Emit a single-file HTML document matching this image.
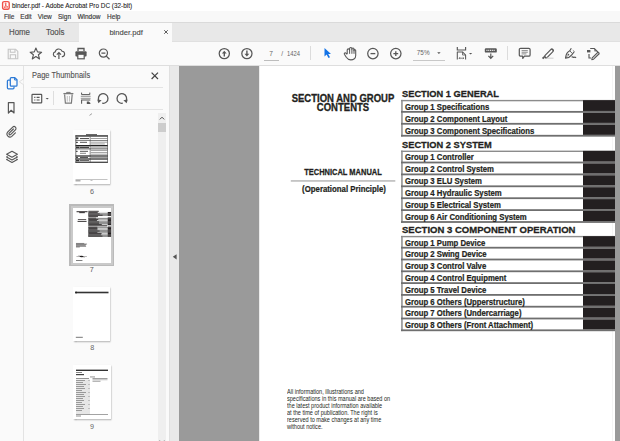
<!DOCTYPE html>
<html><head><meta charset="utf-8">
<style>
*{margin:0;padding:0;box-sizing:border-box}
html,body{width:620px;height:441px;overflow:hidden;background:#fff;font-family:"Liberation Sans",sans-serif;position:relative}
.a{position:absolute;display:block}
.t{position:absolute;white-space:nowrap;line-height:1}
</style></head><body>
<div class="a" style="left:0px;top:0px;width:620px;height:11px;background:#ffffff;"></div>
<div class="a" style="left:0px;top:11px;width:620px;height:11px;background:#f8f8f8;"></div>
<div class="a" style="left:0px;top:22px;width:620px;height:20px;background:#e8e8e8;"></div>
<div class="a" style="left:79px;top:22px;width:93px;height:20px;background:#fafafa;"></div>
<div class="a" style="left:0px;top:22px;width:620px;height:1px;background:#dadada;"></div>
<div class="a" style="left:0px;top:41px;width:79px;height:1px;background:#e0e0e0;"></div>
<div class="a" style="left:172px;top:41px;width:448px;height:1px;background:#e0e0e0;"></div>
<div class="a" style="left:0px;top:42px;width:620px;height:23px;background:#fafafa;"></div>
<div class="a" style="left:0px;top:65px;width:620px;height:1px;background:#dedede;"></div>
<div class="a" style="left:0px;top:66px;width:23px;height:375px;background:#fafafa;"></div>
<div class="a" style="left:23px;top:66px;width:1px;height:375px;background:#e3e3e3;"></div>
<div class="a" style="left:24px;top:66px;width:145px;height:375px;background:#fafafa;"></div>
<div class="a" style="left:158px;top:113px;width:8px;height:328px;background:#efefef;"></div>
<div class="a" style="left:169px;top:66px;width:1px;height:375px;background:#e0e0e0;"></div>
<div class="a" style="left:170px;top:66px;width:9px;height:375px;background:#e9e9e9;"></div>
<div class="a" style="left:179px;top:66px;width:441px;height:375px;background:#9a9a9a;"></div>
<div class="a" style="left:259px;top:66px;width:356px;height:375px;background:#ffffff;"></div>
<div class="a" style="left:259px;top:66px;width:1px;height:375px;background:#ececec;"></div>
<div class="a" style="left:612px;top:66px;width:1px;height:375px;background:#f5f5f5;"></div>
<svg class="a" style="left:1px;top:0px;" width="10" height="11" viewBox="0 0 10 11"><rect x="1.6" y="1.6" width="6.6" height="7.6" rx="1.5" fill="#fff" stroke="#f0504a" stroke-width="1.4"/><path d="M3.3 7.6 C4.5 5.5 5.2 4.2 5 3.3 C4.9 2.6 4.2 2.8 4.3 3.6 C4.5 5 5.6 6.4 6.9 7.2 M3.2 7.5 C4.3 6.9 5.7 6.8 6.8 7" fill="none" stroke="#f0504a" stroke-width="0.9"/></svg>
<div class="t" style="left:12.00px;top:2.58px;font-size:6.4px;color:#1a1a1a;-webkit-text-stroke:0.08px #1a1a1a;">binder.pdf - Adobe Acrobat Pro DC (32-bit)</div>
<div class="t" style="left:3.90px;top:14.10px;font-size:6.5px;color:#3a3a3a;-webkit-text-stroke:0.15px #3a3a3a;">File</div>
<div class="t" style="left:20.30px;top:14.10px;font-size:6.5px;color:#3a3a3a;-webkit-text-stroke:0.15px #3a3a3a;">Edit</div>
<div class="t" style="left:37.80px;top:14.10px;font-size:6.5px;color:#3a3a3a;-webkit-text-stroke:0.15px #3a3a3a;">View</div>
<div class="t" style="left:58.00px;top:14.10px;font-size:6.5px;color:#3a3a3a;-webkit-text-stroke:0.15px #3a3a3a;">Sign</div>
<div class="t" style="left:77.40px;top:14.10px;font-size:6.5px;color:#3a3a3a;-webkit-text-stroke:0.15px #3a3a3a;">Window</div>
<div class="t" style="left:107.10px;top:14.10px;font-size:6.5px;color:#3a3a3a;-webkit-text-stroke:0.15px #3a3a3a;">Help</div>
<div class="t" style="left:9.00px;top:28.29px;font-size:8.4px;color:#505050;transform:scaleX(0.94);transform-origin:0 0;-webkit-text-stroke:0.15px #505050;">Home</div>
<div class="t" style="left:46.00px;top:28.29px;font-size:8.4px;color:#505050;transform:scaleX(0.94);transform-origin:0 0;-webkit-text-stroke:0.15px #505050;">Tools</div>
<div class="t" style="left:109.40px;top:28.77px;font-size:7.6px;color:#4a4a4a;-webkit-text-stroke:0.12px #4a4a4a;">binder.pdf</div>
<svg class="a" style="left:162px;top:28px;" width="8" height="8" viewBox="0 0 8 8"><path d="M2.2 2.2 L5.8 5.8 M5.8 2.2 L2.2 5.8" stroke="#555" stroke-width="0.95"/></svg>
<svg class="a" style="left:7px;top:48px;" width="12" height="12" viewBox="0 0 12 12"><path d="M1.2 1.2 H8.6 L10.8 3.4 V10.8 H1.2 Z" fill="none" stroke="#c4c4c4" stroke-width="1.1"/><path d="M3.3 1.2 V4.3 H8 V1.2 M3.3 10.8 V6.8 H8.6 V10.8" fill="none" stroke="#c4c4c4" stroke-width="1.1"/></svg>
<svg class="a" style="left:29px;top:47px;" width="14" height="13" viewBox="0 0 14 13"><path d="M6.9 1 L8.5 4.9 L12.6 5.2 L9.4 7.8 L10.5 11.9 L6.9 9.6 L3.3 11.9 L4.4 7.8 L1.2 5.2 L5.3 4.9 Z" fill="none" stroke="#575757" stroke-width="1.15" stroke-linejoin="round"/></svg>
<svg class="a" style="left:52px;top:47px;" width="14" height="13" viewBox="0 0 14 13"><path d="M4 9.6 H3.3 A2.4 2.4 0 0 1 3.2 4.9 A3.6 3.6 0 0 1 10.1 4.3 A2.7 2.7 0 0 1 10.6 9.6 H9.8" fill="none" stroke="#575757" stroke-width="1.15"/><path d="M6.9 12 V5.6 M4.8 7.6 L6.9 5.5 L9 7.6" fill="none" stroke="#575757" stroke-width="1.2"/></svg>
<svg class="a" style="left:74px;top:47px;" width="14" height="13" viewBox="0 0 14 13"><path d="M4 4 V1.5 H10 V4" fill="none" stroke="#575757" stroke-width="1.3"/><rect x="1.4" y="4.2" width="11.2" height="5.4" rx="1" fill="#575757"/><rect x="3.8" y="7.2" width="6.4" height="4.6" fill="#fafafa" stroke="#575757" stroke-width="1.2"/></svg>
<svg class="a" style="left:98px;top:48px;" width="14" height="12" viewBox="0 0 14 12"><circle cx="5.4" cy="5.1" r="4.1" fill="none" stroke="#575757" stroke-width="1.2"/><path d="M3.4 5.1 H7.4 M8.3 8.1 L11.5 11.3" fill="none" stroke="#575757" stroke-width="1.3"/></svg>
<svg class="a" style="left:218px;top:47px;" width="13" height="13" viewBox="0 0 13 13"><circle cx="6.3" cy="6.6" r="5.1" fill="none" stroke="#575757" stroke-width="1.25"/><path d="M6.3 9.6 V5.2" stroke="#575757" stroke-width="1.4"/><path d="M3.9 6.4 L6.3 3.7 L8.7 6.4 Z" fill="#575757"/></svg>
<svg class="a" style="left:240px;top:47px;" width="13" height="13" viewBox="0 0 13 13"><circle cx="6.9" cy="6.6" r="5.1" fill="none" stroke="#575757" stroke-width="1.25"/><path d="M6.9 3.6 V8" stroke="#575757" stroke-width="1.4"/><path d="M4.5 6.8 L6.9 9.5 L9.3 6.8 Z" fill="#575757"/></svg>
<div class="t" style="left:269.30px;top:50.61px;font-size:6.6px;color:#666;">7</div>
<div class="a" style="left:264px;top:60px;width:15px;height:1px;background:#bdbdbd;"></div>
<div class="t" style="left:281.20px;top:50.81px;font-size:6.6px;color:#666;">/</div>
<div class="t" style="left:287.00px;top:50.87px;font-size:6.3px;color:#666;transform:scaleX(0.92);transform-origin:0 0;">1424</div>
<div class="a" style="left:310px;top:46px;width:1px;height:14px;background:#dcdcdc;"></div>
<svg class="a" style="left:322px;top:47px;" width="11" height="12" viewBox="0 0 11 12"><path d="M2.5 1 L2.5 9.6 L4.6 7.6 L6.5 11 L8 10.2 L6.2 6.9 L9 6.9 Z" fill="#1473e6"/></svg>
<svg class="a" style="left:343px;top:46px;" width="15" height="16" viewBox="0 0 15 16"><path d="M4.2 8 V4.1 A1.2 1.2 0 0 1 6.6 4.1 V2.7 A1.15 1.15 0 0 1 8.9 2.7 V3.1 A1.05 1.05 0 0 1 11 3.1 V4.6 A0.85 0.85 0 0 1 12.7 4.6 V9.6 C12.7 12.4 10.6 13.9 7.8 13.9 C5.6 13.9 4.3 12.8 3.3 11.3 L1.4 8.2 A0.95 0.95 0 0 1 3 7.2 L4.2 8.4" fill="none" stroke="#575757" stroke-width="1.1" stroke-linejoin="round"/><path d="M6.6 4 V7.8 M8.9 2.7 V7.8 M11 3.1 V7.8" stroke="#575757" stroke-width="1"/></svg>
<svg class="a" style="left:366px;top:47px;" width="14" height="13" viewBox="0 0 14 13"><circle cx="6.9" cy="6.6" r="5.2" fill="none" stroke="#575757" stroke-width="1.25"/><path d="M4.5 6.6 H9.3" stroke="#575757" stroke-width="1.3"/></svg>
<svg class="a" style="left:389px;top:47px;" width="14" height="13" viewBox="0 0 14 13"><circle cx="6.8" cy="6.6" r="5.2" fill="none" stroke="#575757" stroke-width="1.25"/><path d="M4.4 6.6 H9.2 M6.8 4.2 V9" stroke="#575757" stroke-width="1.3"/></svg>
<div class="t" style="left:416.80px;top:50.48px;font-size:6.4px;color:#666;">75%</div>
<svg class="a" style="left:436px;top:51px;" width="6" height="4" viewBox="0 0 6 4"><path d="M1.2 1.2 H4.6 L2.9 3 Z" fill="#555"/></svg>
<div class="a" style="left:413px;top:60px;width:32px;height:1px;background:#c8c8c8;"></div>
<svg class="a" style="left:455px;top:46px;" width="20" height="15" viewBox="0 0 20 15"><path d="M2.3 1 V4 H10.6 V1" fill="none" stroke="#575757" stroke-width="1.15"/><path d="M2.3 13.4 V5.9 H7.5 L10.6 9 V13.4" fill="none" stroke="#575757" stroke-width="1.05" stroke-linejoin="round"/><path d="M7.5 5.9 V9 H10.6" fill="none" stroke="#575757" stroke-width="0.8"/><path d="M4 12.2 H8.8 M4.9 11.3 L4 12.2 L4.9 13.1 M7.9 11.3 L8.8 12.2 L7.9 13.1" fill="none" stroke="#575757" stroke-width="0.75"/><path d="M14 6.9 H17.2 L15.6 8.4 Z" fill="#555"/></svg>
<svg class="a" style="left:484px;top:47px;" width="14" height="13" viewBox="0 0 14 13"><rect x="0.8" y="1.2" width="12" height="4.4" rx="1.2" fill="#575757"/><path d="M2.4 3.4 H11.2" stroke="#e8e8e8" stroke-width="1.2" stroke-dasharray="1.1 0.7"/><path d="M6.8 6.6 V11.2 M4.4 8.8 L6.8 11.3 L9.2 8.8" fill="none" stroke="#575757" stroke-width="1.2"/></svg>
<div class="a" style="left:507px;top:46px;width:1px;height:14px;background:#dcdcdc;"></div>
<svg class="a" style="left:518px;top:47px;" width="14" height="13" viewBox="0 0 14 13"><path d="M2.6 1.3 H10.8 A1.3 1.3 0 0 1 12.1 2.6 V7.9 A1.3 1.3 0 0 1 10.8 9.2 H6.4 L4.8 11.4 L4.6 9.2 H2.6 A1.3 1.3 0 0 1 1.3 7.9 V2.6 A1.3 1.3 0 0 1 2.6 1.3 Z" fill="none" stroke="#575757" stroke-width="1.2" stroke-linejoin="round"/><path d="M3.6 3.6 H9.8 M3.6 5.25 H9.8 M3.6 6.9 H8.4" stroke="#6a6a6a" stroke-width="0.75"/></svg>
<svg class="a" style="left:540px;top:48px;" width="15" height="13" viewBox="0 0 15 13"><path d="M6.2 8.4 L11.8 2.6" stroke="#575757" stroke-width="4.2" stroke-linecap="round"/><path d="M6.4 8.2 L11.6 2.8" stroke="#fafafa" stroke-width="1.8" stroke-linecap="round"/><path d="M2.6 10.6 L4.2 9" stroke="#575757" stroke-width="1.8"/><path d="M6.5 10.2 H13.5" stroke="#d4d4d4" stroke-width="1.2"/></svg>
<svg class="a" style="left:563px;top:47px;" width="15" height="13" viewBox="0 0 15 13"><path d="M8.3 1.3 L6.8 3.8 C4.6 4.8 3 6.6 2.5 11.1 C5.4 10.7 7.6 9.5 8.8 7.8 L11.4 4.5" fill="none" stroke="#575757" stroke-width="1.15" stroke-linejoin="round"/><path d="M6.8 3.8 L9.3 6.5" stroke="#575757" stroke-width="0.9"/><path d="M11.4 4.5 L9.8 3.2" stroke="#888" stroke-width="0.8"/><circle cx="5.4" cy="7.6" r="0.85" fill="#575757"/><path d="M2.6 11 L5 8.3" stroke="#575757" stroke-width="0.7"/><path d="M8.6 10.2 C9.6 9.4 10.4 10.8 11.4 10.2 C12.2 9.8 12.6 10.4 13 10.8" fill="none" stroke="#575757" stroke-width="1.2"/></svg>
<svg class="a" style="left:586px;top:47px;" width="15" height="14" viewBox="0 0 15 14"><rect x="1" y="3" width="3.4" height="2.4" fill="#575757"/><path d="M4.2 1.5 H8.2 L13.4 6.5" fill="none" stroke="#575757" stroke-width="1.1" stroke-linejoin="round"/><path d="M8.2 2 L10.2 4.2 L8.6 4.6 Z" fill="#575757"/><path d="M3 7 V11 H5" fill="none" stroke="#575757" stroke-width="1.15"/><path d="M13.4 6.5 L7.6 12.2 L5.8 12.6 L6.2 10.8 L12 5.1" fill="none" stroke="#575757" stroke-width="1.1" stroke-linejoin="round"/><path d="M7 11.4 L12.6 5.8" stroke="#999" stroke-width="0.6"/></svg>
<svg class="a" style="left:5px;top:75px;" width="15" height="15" viewBox="0 0 15 15"><path d="M5.2 5 H3.4 A1 1 0 0 0 2.4 6 V12.8 A1 1 0 0 0 3.4 13.8 H8 A1 1 0 0 0 9 12.8 V11.5" fill="none" stroke="#2c7ad6" stroke-width="1.25"/><path d="M6.2 2.6 H9.8 L12 4.8 V10.2 A0.9 0.9 0 0 1 11.1 11.1 H6.2 A0.9 0.9 0 0 1 5.3 10.2 V3.5 A0.9 0.9 0 0 1 6.2 2.6 Z" fill="none" stroke="#2c7ad6" stroke-width="1.25" stroke-linejoin="round"/><path d="M9.6 2.8 V5 H11.8" fill="none" stroke="#2c7ad6" stroke-width="1"/></svg>
<svg class="a" style="left:18px;top:76px;" width="6" height="12" viewBox="0 0 6 12"><path d="M5.5 0 V3 L1.2 5.8 L5.5 8.6 V12" fill="#fafafa" stroke="#e0e0e0" stroke-width="1"/></svg>
<svg class="a" style="left:6px;top:101px;" width="10" height="14" viewBox="0 0 10 14"><path d="M2.4 1.6 H8 V12 L5.2 9.3 L2.4 12 Z" fill="none" stroke="#575757" stroke-width="1.2" stroke-linejoin="round"/></svg>
<svg class="a" style="left:5px;top:125px;" width="13" height="13" viewBox="0 0 13 13"><path d="M8.4 4 L4.2 8.2 A1 1 0 0 0 5.6 9.6 L10.4 4.8 A1.9 1.9 0 0 0 7.7 2.1 L2.6 7.2 A3 3 0 0 0 6.8 11.4 L10.4 7.8" fill="none" stroke="#575757" stroke-width="1.15" stroke-linecap="round"/></svg>
<svg class="a" style="left:5px;top:150px;" width="14" height="14" viewBox="0 0 14 14"><path d="M7 1.3 L12.4 4.3 L7 7.3 L1.6 4.3 Z" fill="none" stroke="#575757" stroke-width="1.1" stroke-linejoin="round"/><path d="M2.6 6.3 L1.6 6.9 L7 9.9 L12.4 6.9 L11.4 6.3 M2.6 8.9 L1.6 9.5 L7 12.5 L12.4 9.5 L11.4 8.9" fill="none" stroke="#575757" stroke-width="1.1" stroke-linejoin="round"/></svg>
<div class="t" style="left:31.70px;top:72.06px;font-size:8.2px;color:#505050;transform:scaleX(0.915);transform-origin:0 0;-webkit-text-stroke:0.1px #505050;">Page Thumbnails</div>
<svg class="a" style="left:150px;top:71px;" width="10" height="10" viewBox="0 0 10 10"><path d="M1.6 1.6 L8 8 M8 1.6 L1.6 8" stroke="#444" stroke-width="1.2"/></svg>
<div class="a" style="left:31px;top:87px;width:132px;height:1px;background:#e4e4e4;"></div>
<div class="a" style="left:31px;top:109px;width:132px;height:1px;background:#e4e4e4;"></div>
<svg class="a" style="left:31px;top:93px;" width="20" height="12" viewBox="0 0 20 12"><rect x="1" y="1.3" width="9.7" height="8.6" rx="0.6" fill="none" stroke="#575757" stroke-width="1.2"/><path d="M3.2 4.4 H4.4 M5.6 4.4 H8.6 M3.2 7 H4.4 M5.6 7 H8.6" stroke="#575757" stroke-width="1.1"/><path d="M14.6 5 H17.8 L16.2 6.4 Z" fill="#555"/></svg>
<div class="a" style="left:53px;top:91px;width:1px;height:14px;background:#dedede;"></div>
<svg class="a" style="left:62px;top:91px;" width="13" height="14" viewBox="0 0 13 14"><path d="M1.4 2.6 H11.4" stroke="#7a7a7a" stroke-width="1.3"/><path d="M4.6 2.4 V1.4 H8.2 V2.4" fill="none" stroke="#7a7a7a" stroke-width="1"/><path d="M2.6 3.4 L3.4 12.2 H9.4 L10.2 3.4" fill="none" stroke="#7a7a7a" stroke-width="1.2"/><path d="M5.3 5 V10.6 M7.5 5 V10.6" stroke="#bdbdbd" stroke-width="0.9"/></svg>
<svg class="a" style="left:80px;top:92px;" width="12" height="13" viewBox="0 0 12 13"><path d="M1.6 0.6 V2.6 H9.8 V0.6" fill="none" stroke="#575757" stroke-width="1"/><path d="M0.8 4.3 H10.6 M0.8 6.3 H10.6" stroke="#777" stroke-width="0.8"/><path d="M1.6 11.8 V7.9 H9.8 V8.6" fill="none" stroke="#575757" stroke-width="1.05"/><path d="M6.8 9.4 H8.8 L10.4 11 V12 H6.8 Z" fill="#575757"/></svg>
<svg class="a" style="left:96px;top:92px;" width="15" height="13" viewBox="0 0 15 13"><path d="M3.2 9.2 A4.8 4.8 0 1 1 6.2 11.2" fill="none" stroke="#575757" stroke-width="1.3"/><path d="M1.2 7.4 L5.6 8.2 L2.4 11.2 Z" fill="#575757"/></svg>
<svg class="a" style="left:114px;top:92px;" width="15" height="13" viewBox="0 0 15 13"><path d="M11.8 9.2 A4.8 4.8 0 1 0 8.8 11.2" fill="none" stroke="#575757" stroke-width="1.3"/><path d="M13.8 7.4 L9.4 8.2 L12.6 11.2 Z" fill="#575757"/></svg>
<svg class="a" style="left:158px;top:114px;" width="8" height="8" viewBox="0 0 8 8"><path d="M1.8 5.4 L4 3.2 L6.2 5.4" fill="none" stroke="#505050" stroke-width="1"/></svg>
<div class="a" style="left:158px;top:123px;width:8px;height:9px;background:#cdcdcd;"></div>
<svg class="a" style="left:158px;top:438px;" width="8" height="5" viewBox="0 0 8 5"><path d="M1.8 2.6 L4 4.8 L6.2 2.6" fill="none" stroke="#505050" stroke-width="1"/></svg>
<svg class="a" style="left:171px;top:253px;" width="7" height="8" viewBox="0 0 7 8"><path d="M5.6 1.2 V6.4 L1.8 3.8 Z" fill="#555"/></svg>
<svg class="a" style="left:89px;top:113px;" width="4" height="3" viewBox="0 0 4 3"><path d="M0.5 2.4 L3 0.6" stroke="#888" stroke-width="0.8"/></svg>
<div class="a" style="left:73px;top:130px;width:37px;height:54px;background:#ffffff;box-shadow:0.5px 1px 1.5px rgba(0,0,0,0.35);"></div>
<svg class="a" style="left:73px;top:130px" width="37" height="54" viewBox="0 0 37 54"><rect x="13" y="4.2" width="11" height="1.0" fill="#444"/><rect x="2.5" y="5.3" width="32.3" height="1.3" fill="#222"/><rect x="3" y="7.4" width="2.4" height="1.8" fill="#333"/><rect x="7" y="8.0" width="9" height="1.1" fill="#555"/><rect x="17.8" y="8.15" width="16.5" height="0.8" fill="#8a8a8a"/><rect x="2.5" y="10.3" width="32.3" height="0.6" fill="#333"/><rect x="3" y="11.8" width="1.8" height="1.2" fill="#444"/><rect x="7" y="11.8" width="7" height="1.1" fill="#666"/><rect x="17.8" y="11.75" width="16.5" height="0.8" fill="#8a8a8a"/><rect x="17.8" y="13.55" width="14" height="0.8" fill="#8a8a8a"/><rect x="2.5" y="15.0" width="32.3" height="1.3" fill="#222"/><rect x="3" y="16.6" width="3.6" height="1.6" fill="#333"/><rect x="7" y="16.7" width="9" height="1.4" fill="#444"/><rect x="17.8" y="16.75" width="16.5" height="0.8" fill="#8a8a8a"/><rect x="2.5" y="18.5" width="32.3" height="0.8" fill="#333"/><rect x="3" y="20.8" width="1.6" height="1.2" fill="#555"/><rect x="7" y="20.8" width="8" height="1.1" fill="#666"/><rect x="7" y="22.8" width="6" height="1.0" fill="#888"/><rect x="17.8" y="19.95" width="16.5" height="0.8" fill="#8a8a8a"/><rect x="17.8" y="21.95" width="16.5" height="0.8" fill="#8a8a8a"/><rect x="17.8" y="23.75" width="16.5" height="0.8" fill="#8a8a8a"/><rect x="2.5" y="25.4" width="32.3" height="1.2" fill="#222"/><rect x="3" y="26.9" width="2" height="1.1" fill="#444"/><rect x="7" y="26.9" width="8" height="1.1" fill="#555"/><rect x="17.8" y="27.05" width="16.5" height="0.8" fill="#8a8a8a"/><rect x="2.5" y="28.4" width="32.3" height="1.2" fill="#222"/><rect x="3" y="29.9" width="3.4" height="1.4" fill="#333"/><rect x="7" y="30" width="9" height="1.1" fill="#666"/><rect x="2.5" y="31.7" width="32.3" height="1.1" fill="#222"/><rect x="2.5" y="5.3" width="0.7" height="27.5" fill="#444"/><rect x="34.2" y="5.3" width="0.6" height="27.5" fill="#444"/><rect x="16.8" y="6.6" width="0.6" height="26" fill="#444"/><rect x="2.5" y="49.4" width="32" height="0.5" fill="#888"/><rect x="2.5" y="50.4" width="5" height="0.9" fill="#777"/><rect x="17.5" y="50.4" width="2" height="0.6" fill="#999"/></svg>
<div class="t" style="left:90.00px;top:187.91px;font-size:7.2px;color:#666;">6</div>
<div class="a" style="left:69px;top:204px;width:45px;height:62px;background:#bababa;"></div>
<div class="a" style="left:70.5px;top:205.5px;width:42px;height:59px;background:#cacaca;"></div>
<div class="a" style="left:72.5px;top:207.5px;width:38.5px;height:55px;background:#ffffff;"></div>
<div class="t" style="left:89.80px;top:265.91px;font-size:7.2px;color:#555;">7</div>
<div class="a" style="left:73px;top:287px;width:37px;height:54px;background:#ffffff;box-shadow:0.5px 1px 1.5px rgba(0,0,0,0.35);"></div>
<svg class="a" style="left:73px;top:287px" width="37" height="54" viewBox="0 0 37 54"><rect x="2.5" y="4.7" width="33" height="1.6" fill="#333"/><circle cx="3" cy="5.5" r="1" fill="#222"/><rect x="2.8" y="49.8" width="7" height="1" fill="#777"/></svg>
<div class="t" style="left:90.30px;top:344.41px;font-size:7.2px;color:#666;">8</div>
<div class="a" style="left:73px;top:365px;width:38px;height:54px;background:#ffffff;box-shadow:0.5px 1px 1.5px rgba(0,0,0,0.35);"></div>
<svg class="a" style="left:73px;top:365px" width="38" height="54" viewBox="0 0 38 54"><rect x="3" y="4.6" width="32" height="1.4" fill="#333"/><rect x="3" y="7" width="6" height="0.8" fill="#666"/><rect x="3" y="9" width="8" height="1.2" fill="#444"/><rect x="17" y="11.6" width="5" height="0.7" fill="#666"/><rect x="3" y="13.2" width="13" height="0.8" fill="#777"/><rect x="19.5" y="13" width="15" height="0.8" fill="#888"/><rect x="19.5" y="14.4" width="15" height="0.8" fill="#aaa"/><rect x="19.5" y="15.8" width="8" height="0.8" fill="#888"/><rect x="3" y="14.5" width="14" height="35" fill="#e6e6e6"/><g fill="#777"><rect x="3" y="15" width="9" height="0.7"/><rect x="3" y="17" width="7" height="0.7"/><rect x="3" y="19" width="10" height="0.7"/><rect x="3" y="21" width="8" height="0.7"/><rect x="3" y="23" width="9" height="0.7"/><rect x="3" y="25" width="6" height="0.7"/><rect x="3" y="27" width="10" height="0.7"/><rect x="3" y="29" width="8" height="0.7"/><rect x="3" y="31" width="9" height="0.7"/><rect x="3" y="33" width="7" height="0.7"/><rect x="3" y="35" width="8" height="0.7"/><rect x="3" y="37" width="6" height="0.7"/><rect x="3" y="39" width="9" height="0.7"/><rect x="3" y="41" width="7" height="0.7"/><rect x="3" y="43" width="8" height="0.7"/><rect x="3" y="45" width="6" height="0.7"/><rect x="15.5" y="15" width="1" height="0.7"/><rect x="15.5" y="19" width="1" height="0.7"/><rect x="15.5" y="23" width="1" height="0.7"/><rect x="15.5" y="27" width="1" height="0.7"/><rect x="15.5" y="31" width="1" height="0.7"/><rect x="15.5" y="35" width="1" height="0.7"/><rect x="15.5" y="39" width="1" height="0.7"/><rect x="15.5" y="43" width="1" height="0.7"/></g><rect x="3" y="49.4" width="32" height="0.6" fill="#666"/><rect x="3" y="50.6" width="5" height="0.8" fill="#777"/></svg>
<div class="t" style="left:90.10px;top:422.51px;font-size:7.2px;color:#666;">9</div>
<div class="a" style="left:259px;top:66px;width:356px;height:375px;overflow:hidden">
<div class="a" style="left:0;top:-3px;width:356px;height:511px">
<svg class="a" style="left:0;top:0" width="356" height="511" viewBox="0 0 356 511"><rect x="31.8" y="117.4" width="104.5" height="1.1" fill="#9d9d9d"/><rect x="142" y="36.90" width="215" height="1.4" fill="#8c8c8c"/><rect x="142.2" y="36.90" width="1.5" height="36.65" fill="#8c8c8c"/><rect x="142" y="47.95" width="215" height="1.8" fill="#6f6f6f"/><rect x="324" y="37.20" width="32" height="10.75" fill="#231f20"/><rect x="142" y="59.90" width="215" height="1.8" fill="#6f6f6f"/><rect x="324" y="49.75" width="32" height="10.15" fill="#231f20"/><rect x="142" y="71.85" width="215" height="1.8" fill="#6f6f6f"/><rect x="324" y="61.70" width="32" height="10.15" fill="#231f20"/><rect x="142" y="87.60" width="215" height="1.4" fill="#8c8c8c"/><rect x="142.2" y="87.60" width="1.5" height="72.20" fill="#8c8c8c"/><rect x="142" y="98.60" width="215" height="1.8" fill="#6f6f6f"/><rect x="324" y="87.90" width="32" height="10.70" fill="#231f20"/><rect x="142" y="110.50" width="215" height="1.8" fill="#6f6f6f"/><rect x="324" y="100.40" width="32" height="10.10" fill="#231f20"/><rect x="142" y="122.40" width="215" height="1.8" fill="#6f6f6f"/><rect x="324" y="112.30" width="32" height="10.10" fill="#231f20"/><rect x="142" y="134.30" width="215" height="1.8" fill="#6f6f6f"/><rect x="324" y="124.20" width="32" height="10.10" fill="#231f20"/><rect x="142" y="146.20" width="215" height="1.8" fill="#6f6f6f"/><rect x="324" y="136.10" width="32" height="10.10" fill="#231f20"/><rect x="142" y="158.10" width="215" height="1.8" fill="#6f6f6f"/><rect x="324" y="148.00" width="32" height="10.10" fill="#231f20"/><rect x="142" y="172.90" width="215" height="1.4" fill="#8c8c8c"/><rect x="142.2" y="172.90" width="1.5" height="95.20" fill="#8c8c8c"/><rect x="142" y="183.80" width="215" height="1.8" fill="#6f6f6f"/><rect x="324" y="173.20" width="32" height="10.60" fill="#231f20"/><rect x="142" y="195.60" width="215" height="1.8" fill="#6f6f6f"/><rect x="324" y="185.60" width="32" height="10.00" fill="#231f20"/><rect x="142" y="207.40" width="215" height="1.8" fill="#6f6f6f"/><rect x="324" y="197.40" width="32" height="10.00" fill="#231f20"/><rect x="142" y="219.20" width="215" height="1.8" fill="#6f6f6f"/><rect x="324" y="209.20" width="32" height="10.00" fill="#231f20"/><rect x="142" y="231.00" width="215" height="1.8" fill="#6f6f6f"/><rect x="324" y="221.00" width="32" height="10.00" fill="#231f20"/><rect x="142" y="242.80" width="215" height="1.8" fill="#6f6f6f"/><rect x="324" y="232.80" width="32" height="10.00" fill="#231f20"/><rect x="142" y="254.60" width="215" height="1.8" fill="#6f6f6f"/><rect x="324" y="244.60" width="32" height="10.00" fill="#231f20"/><rect x="142" y="266.40" width="215" height="1.8" fill="#6f6f6f"/><rect x="324" y="256.40" width="32" height="10.00" fill="#231f20"/></svg>
<div class="t" style="left:-65.70px;width:300px;text-align:center;top:30.31px;font-size:10.5px;color:#231f20;font-weight:bold;-webkit-text-stroke:0.3px #231f20;transform:scaleX(0.905);transform-origin:150px 0;">SECTION AND GROUP</div>
<div class="t" style="left:-65.70px;width:300px;text-align:center;top:39.01px;font-size:10.5px;color:#231f20;font-weight:bold;-webkit-text-stroke:0.3px #231f20;transform:scaleX(0.905);transform-origin:150px 0;">CONTENTS</div>
<div class="t" style="left:-65.90px;width:300px;text-align:center;top:105.32px;font-size:8.6px;color:#231f20;font-weight:bold;-webkit-text-stroke:0.26px #231f20;transform:scaleX(0.87);transform-origin:150px 0;">TECHNICAL MANUAL</div>
<div class="t" style="left:-65.50px;width:300px;text-align:center;top:121.84px;font-size:8.7px;color:#231f20;font-weight:bold;-webkit-text-stroke:0.22px #231f20;transform:scaleX(0.9);transform-origin:150px 0;">(Operational Principle)</div>
<div class="t" style="left:142.80px;top:26.32px;font-size:9.9px;color:#231f20;font-weight:bold;-webkit-text-stroke:0.28px #231f20;transform:scaleX(0.94);transform-origin:0 0;">SECTION 1 GENERAL</div>
<div class="t" style="left:146.30px;top:39.62px;font-size:8.6px;color:#231f20;font-weight:bold;-webkit-text-stroke:0.22px #231f20;transform:scaleX(0.9);transform-origin:0 0;">Group 1 Specifications</div>
<div class="t" style="left:146.30px;top:51.57px;font-size:8.6px;color:#231f20;font-weight:bold;-webkit-text-stroke:0.22px #231f20;transform:scaleX(0.9);transform-origin:0 0;">Group 2 Component Layout</div>
<div class="t" style="left:146.30px;top:63.52px;font-size:8.6px;color:#231f20;font-weight:bold;-webkit-text-stroke:0.22px #231f20;transform:scaleX(0.9);transform-origin:0 0;">Group 3 Component Specifications</div>
<div class="t" style="left:142.80px;top:76.62px;font-size:9.9px;color:#231f20;font-weight:bold;-webkit-text-stroke:0.28px #231f20;transform:scaleX(0.94);transform-origin:0 0;">SECTION 2 SYSTEM</div>
<div class="t" style="left:146.30px;top:90.32px;font-size:8.6px;color:#231f20;font-weight:bold;-webkit-text-stroke:0.22px #231f20;transform:scaleX(0.9);transform-origin:0 0;">Group 1 Controller</div>
<div class="t" style="left:146.30px;top:102.22px;font-size:8.6px;color:#231f20;font-weight:bold;-webkit-text-stroke:0.22px #231f20;transform:scaleX(0.9);transform-origin:0 0;">Group 2 Control System</div>
<div class="t" style="left:146.30px;top:114.12px;font-size:8.6px;color:#231f20;font-weight:bold;-webkit-text-stroke:0.22px #231f20;transform:scaleX(0.9);transform-origin:0 0;">Group 3 ELU System</div>
<div class="t" style="left:146.30px;top:126.02px;font-size:8.6px;color:#231f20;font-weight:bold;-webkit-text-stroke:0.22px #231f20;transform:scaleX(0.9);transform-origin:0 0;">Group 4 Hydraulic System</div>
<div class="t" style="left:146.30px;top:137.92px;font-size:8.6px;color:#231f20;font-weight:bold;-webkit-text-stroke:0.22px #231f20;transform:scaleX(0.9);transform-origin:0 0;">Group 5 Electrical System</div>
<div class="t" style="left:146.30px;top:149.82px;font-size:8.6px;color:#231f20;font-weight:bold;-webkit-text-stroke:0.22px #231f20;transform:scaleX(0.9);transform-origin:0 0;">Group 6 Air Conditioning System</div>
<div class="t" style="left:142.80px;top:162.32px;font-size:9.9px;color:#231f20;font-weight:bold;-webkit-text-stroke:0.28px #231f20;transform:scaleX(0.965);transform-origin:0 0;">SECTION 3 COMPONENT OPERATION</div>
<div class="t" style="left:146.30px;top:175.62px;font-size:8.6px;color:#231f20;font-weight:bold;-webkit-text-stroke:0.22px #231f20;transform:scaleX(0.9);transform-origin:0 0;">Group 1 Pump Device</div>
<div class="t" style="left:146.30px;top:187.42px;font-size:8.6px;color:#231f20;font-weight:bold;-webkit-text-stroke:0.22px #231f20;transform:scaleX(0.9);transform-origin:0 0;">Group 2 Swing Device</div>
<div class="t" style="left:146.30px;top:199.22px;font-size:8.6px;color:#231f20;font-weight:bold;-webkit-text-stroke:0.22px #231f20;transform:scaleX(0.9);transform-origin:0 0;">Group 3 Control Valve</div>
<div class="t" style="left:146.30px;top:211.02px;font-size:8.6px;color:#231f20;font-weight:bold;-webkit-text-stroke:0.22px #231f20;transform:scaleX(0.9);transform-origin:0 0;">Group 4 Control Equipment</div>
<div class="t" style="left:146.30px;top:222.82px;font-size:8.6px;color:#231f20;font-weight:bold;-webkit-text-stroke:0.22px #231f20;transform:scaleX(0.9);transform-origin:0 0;">Group 5 Travel Device</div>
<div class="t" style="left:146.30px;top:234.62px;font-size:8.6px;color:#231f20;font-weight:bold;-webkit-text-stroke:0.22px #231f20;transform:scaleX(0.9);transform-origin:0 0;">Group 6 Others (Upperstructure)</div>
<div class="t" style="left:146.30px;top:246.42px;font-size:8.6px;color:#231f20;font-weight:bold;-webkit-text-stroke:0.22px #231f20;transform:scaleX(0.9);transform-origin:0 0;">Group 7 Others (Undercarriage)</div>
<div class="t" style="left:146.30px;top:258.22px;font-size:8.6px;color:#231f20;font-weight:bold;-webkit-text-stroke:0.22px #231f20;transform:scaleX(0.9);transform-origin:0 0;">Group 8 Others (Front Attachment)</div>
<div class="t" style="left:27.80px;top:325.90px;font-size:6.5px;color:#231f20;transform:scaleX(0.855);transform-origin:0 0;">All information, illustrations and</div>
<div class="t" style="left:27.80px;top:332.92px;font-size:6.5px;color:#231f20;transform:scaleX(0.855);transform-origin:0 0;">specifications in this manual are based on</div>
<div class="t" style="left:27.80px;top:339.94px;font-size:6.5px;color:#231f20;transform:scaleX(0.855);transform-origin:0 0;">the latest product information available</div>
<div class="t" style="left:27.80px;top:346.96px;font-size:6.5px;color:#231f20;transform:scaleX(0.855);transform-origin:0 0;">at the time of publication. The right is</div>
<div class="t" style="left:27.80px;top:353.98px;font-size:6.5px;color:#231f20;transform:scaleX(0.855);transform-origin:0 0;">reserved to make changes at any time</div>
<div class="t" style="left:27.80px;top:361.00px;font-size:6.5px;color:#231f20;transform:scaleX(0.855);transform-origin:0 0;">without notice.</div>
</div></div>
<div class="a" style="left:72.8px;top:207.6px;width:356px;height:511px;transform:scale(0.1073);transform-origin:0 0">
<svg class="a" style="left:0;top:0" width="356" height="511" viewBox="0 0 356 511"><rect x="33.00" y="30.28" width="102.60" height="8.92" fill="#231f20" fill-opacity="1.0"/><rect x="58.17" y="38.98" width="52.26" height="8.92" fill="#231f20" fill-opacity="1.0"/><rect x="45.31" y="105.29" width="77.59" height="7.31" fill="#231f20" fill-opacity="1.0"/><rect x="31.8" y="117.4" width="104.5" height="1.1" fill="#9d9d9d"/><rect x="42.51" y="121.80" width="83.97" height="7.39" fill="#231f20" fill-opacity="1.0"/><rect x="142.80" y="26.29" width="97.21" height="8.42" fill="#231f20" fill-opacity="1.0"/><rect x="142" y="36.90" width="215" height="1.4" fill="#8c8c8c"/><rect x="142.2" y="36.90" width="6" height="36.65" fill="#8c8c8c"/><rect x="142" y="45.85" width="215" height="5" fill="#333"/><rect x="324" y="37.20" width="32" height="10.75" fill="#231f20"/><rect x="146.30" y="39.59" width="84.30" height="7.31" fill="#231f20" fill-opacity="1.0"/><rect x="142" y="57.80" width="215" height="5" fill="#333"/><rect x="324" y="49.75" width="32" height="10.15" fill="#231f20"/><rect x="146.30" y="51.54" width="102.34" height="7.31" fill="#231f20" fill-opacity="1.0"/><rect x="142" y="69.75" width="215" height="5" fill="#333"/><rect x="324" y="61.70" width="32" height="10.15" fill="#231f20"/><rect x="146.30" y="63.49" width="129.44" height="7.31" fill="#231f20" fill-opacity="1.0"/><rect x="142.80" y="76.58" width="89.98" height="8.42" fill="#231f20" fill-opacity="1.0"/><rect x="142" y="87.60" width="215" height="1.4" fill="#8c8c8c"/><rect x="142.2" y="87.60" width="6" height="72.20" fill="#8c8c8c"/><rect x="142" y="96.50" width="215" height="5" fill="#333"/><rect x="324" y="87.90" width="32" height="10.70" fill="#231f20"/><rect x="146.30" y="90.29" width="68.80" height="7.31" fill="#231f20" fill-opacity="1.0"/><rect x="142" y="108.40" width="215" height="5" fill="#333"/><rect x="324" y="100.40" width="32" height="10.10" fill="#231f20"/><rect x="146.30" y="102.19" width="89.02" height="7.31" fill="#231f20" fill-opacity="1.0"/><rect x="142" y="120.30" width="215" height="5" fill="#333"/><rect x="324" y="112.30" width="32" height="10.10" fill="#231f20"/><rect x="146.30" y="114.09" width="76.99" height="7.31" fill="#231f20" fill-opacity="1.0"/><rect x="142" y="132.20" width="215" height="5" fill="#333"/><rect x="324" y="124.20" width="32" height="10.10" fill="#231f20"/><rect x="146.30" y="125.99" width="96.78" height="7.31" fill="#231f20" fill-opacity="1.0"/><rect x="142" y="144.10" width="215" height="5" fill="#333"/><rect x="324" y="136.10" width="32" height="10.10" fill="#231f20"/><rect x="146.30" y="137.89" width="95.93" height="7.31" fill="#231f20" fill-opacity="1.0"/><rect x="142" y="156.00" width="215" height="5" fill="#333"/><rect x="324" y="148.00" width="32" height="10.10" fill="#231f20"/><rect x="146.30" y="149.79" width="121.84" height="7.31" fill="#231f20" fill-opacity="1.0"/><rect x="142.80" y="162.28" width="173.92" height="8.42" fill="#231f20" fill-opacity="1.0"/><rect x="142" y="172.90" width="215" height="1.4" fill="#8c8c8c"/><rect x="142.2" y="172.90" width="6" height="95.20" fill="#8c8c8c"/><rect x="142" y="181.70" width="215" height="5" fill="#333"/><rect x="324" y="173.20" width="32" height="10.60" fill="#231f20"/><rect x="146.30" y="175.59" width="80.43" height="7.31" fill="#231f20" fill-opacity="1.0"/><rect x="142" y="193.50" width="215" height="5" fill="#333"/><rect x="324" y="185.60" width="32" height="10.00" fill="#231f20"/><rect x="146.30" y="187.39" width="81.72" height="7.31" fill="#231f20" fill-opacity="1.0"/><rect x="142" y="205.30" width="215" height="5" fill="#333"/><rect x="324" y="197.40" width="32" height="10.00" fill="#231f20"/><rect x="146.30" y="199.19" width="81.29" height="7.31" fill="#231f20" fill-opacity="1.0"/><rect x="142" y="217.10" width="215" height="5" fill="#333"/><rect x="324" y="209.20" width="32" height="10.00" fill="#231f20"/><rect x="146.30" y="210.99" width="101.47" height="7.31" fill="#231f20" fill-opacity="1.0"/><rect x="142" y="228.90" width="215" height="5" fill="#333"/><rect x="324" y="221.00" width="32" height="10.00" fill="#231f20"/><rect x="146.30" y="222.79" width="81.31" height="7.31" fill="#231f20" fill-opacity="1.0"/><rect x="142" y="240.70" width="215" height="5" fill="#333"/><rect x="324" y="232.80" width="32" height="10.00" fill="#231f20"/><rect x="146.30" y="234.59" width="119.99" height="7.31" fill="#231f20" fill-opacity="1.0"/><rect x="142" y="252.50" width="215" height="5" fill="#333"/><rect x="324" y="244.60" width="32" height="10.00" fill="#231f20"/><rect x="146.30" y="246.39" width="116.56" height="7.31" fill="#231f20" fill-opacity="1.0"/><rect x="142" y="264.30" width="215" height="5" fill="#333"/><rect x="324" y="256.40" width="32" height="10.00" fill="#231f20"/><rect x="146.30" y="258.19" width="128.29" height="7.31" fill="#231f20" fill-opacity="1.0"/><rect x="27.80" y="325.88" width="76.92" height="5.52" fill="#231f20" fill-opacity="0.75"/><rect x="27.80" y="332.89" width="103.18" height="5.52" fill="#231f20" fill-opacity="0.75"/><rect x="27.80" y="339.92" width="95.15" height="5.52" fill="#231f20" fill-opacity="0.75"/><rect x="27.80" y="346.94" width="90.72" height="5.52" fill="#231f20" fill-opacity="0.75"/><rect x="27.80" y="353.95" width="94.22" height="5.52" fill="#231f20" fill-opacity="0.75"/><rect x="27.80" y="360.98" width="35.53" height="5.52" fill="#231f20" fill-opacity="0.75"/><path d="M32 452 H130" stroke="#231f20" stroke-width="3"/><ellipse cx="80" cy="452" rx="18" ry="7" fill="#231f20"/><path d="M50 444 L110 460" stroke="#231f20" stroke-width="3"/><rect x="28" y="486" width="60" height="8" fill="#6a6a6a"/></svg>
</div>
</body></html>
